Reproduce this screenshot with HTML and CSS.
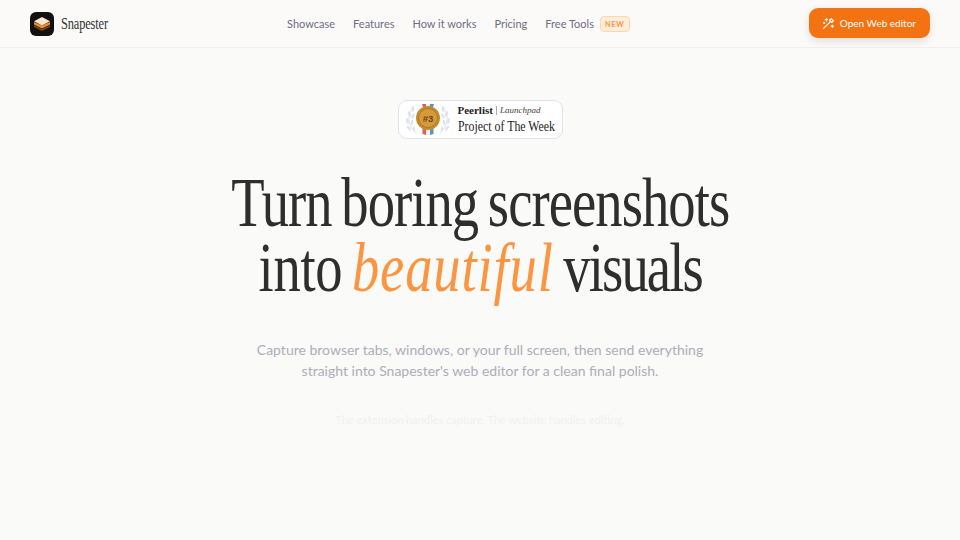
FILE: index.html
```html
<!DOCTYPE html>
<html lang="en">
<head>
    <meta charset="UTF-8">
    <meta name="viewport" content="width=device-width, initial-scale=1.0">
    <title>Snapester</title>
    <link rel="stylesheet" href="styles.css">
</head>
<body>
    <header class="navbar">
        <a class="brand" href="#">
            <span class="brand-icon">
                <svg width="24" height="24" viewBox="0 0 24 24">
                    <path d="M12 17 L20 13 V15 L12 19 L4 15 V13 Z" fill="#7d430f"/>
                    <path d="M12 13.5 L20 10 V12.5 L12 16.5 L4 12.5 V10 Z" fill="#ee9030"/>
                    <path d="M12 5 L20 9.2 L12 13.4 L4 9.2 Z" fill="#fde6cc"/>
                </svg>
            </span>
            <span class="brand-name">Snapester</span>
        </a>
        <nav class="nav-links">
            <a href="#">Showcase</a>
            <a href="#">Features</a>
            <a href="#">How it works</a>
            <a href="#">Pricing</a>
            <a href="#" class="tools-link">Free Tools <span class="new-tag">NEW</span></a>
        </nav>
        <a class="cta" href="#">
            <svg width="13" height="13" viewBox="0 0 24 24" fill="none" stroke="#fff" stroke-width="2.2" stroke-linecap="round" stroke-linejoin="round">
                <path d="M3 21 15 9"/>
                <path d="M14 6l4 4"/>
                <path d="M17 3l4 4-3 3-4-4z"/>
                <path d="M8 3v4M6 5h4M4 10v2M3 11h2M19 15v4M17 17h4"/>
            </svg>
            Open Web editor
        </a>
    </header>

    <main class="hero">
        <div class="award">
            <svg class="award-medal" width="48" height="34" viewBox="0 0 48 34">
                <!-- wreath -->
                <g fill="none" stroke="#dfe3ec" stroke-width="1" stroke-linecap="round">
                    <path d="M9 4c-6 7-6 18 3 26"/>
                    <path d="M39 4c6 7 6 18-3 26"/>
                </g>
                <g fill="#dfe3ec">
                    <ellipse cx="9" cy="6" rx="1.3" ry="3"/>
                    <ellipse cx="5.5" cy="11" rx="1.4" ry="3" transform="rotate(-20 5.5 11)"/>
                    <ellipse cx="9" cy="13" rx="1.2" ry="2.8" transform="rotate(20 9 13)"/>
                    <ellipse cx="3.5" cy="18" rx="1.4" ry="3" transform="rotate(-10 3.5 18)"/>
                    <ellipse cx="8" cy="19.5" rx="1.2" ry="2.8" transform="rotate(15 8 19.5)"/>
                    <ellipse cx="5" cy="25" rx="1.4" ry="3" transform="rotate(-40 5 25)"/>
                    <ellipse cx="10" cy="26" rx="1.2" ry="2.6" transform="rotate(-5 10 26)"/>
                    <ellipse cx="39" cy="6" rx="1.3" ry="3"/>
                    <ellipse cx="42.5" cy="11" rx="1.4" ry="3" transform="rotate(20 42.5 11)"/>
                    <ellipse cx="39" cy="13" rx="1.2" ry="2.8" transform="rotate(-20 39 13)"/>
                    <ellipse cx="44.5" cy="18" rx="1.4" ry="3" transform="rotate(10 44.5 18)"/>
                    <ellipse cx="40" cy="19.5" rx="1.2" ry="2.8" transform="rotate(-15 40 19.5)"/>
                    <ellipse cx="43" cy="25" rx="1.4" ry="3" transform="rotate(40 43 25)"/>
                    <ellipse cx="38" cy="26" rx="1.2" ry="2.6" transform="rotate(5 38 26)"/>
                </g>
                <!-- ribbons -->
                <path d="M18 1h4l1 6h-3z" fill="#dd5f5a"/>
                <path d="M22 1h4l-1 6h-3z" fill="#f4f4f4"/>
                <path d="M26 1h4l-2 6h-3z" fill="#5c93c9"/>
                <path d="M18.500 24h3.500v8l-3.500 -1z" fill="#dd5f5a"/>
                <path d="M22 24h4v8h-4z" fill="#f4f4f4"/>
                <path d="M26 24h3.500v7l-3.500 1z" fill="#5c93c9"/>
                <circle cx="24" cy="15" r="12" fill="#c68b30"/>
                <circle cx="24" cy="15" r="9.500" fill="#d49a3c" stroke="#a8721f" stroke-width="0.8"/>
                <text x="24" y="18.500" text-anchor="middle" class="medal-num">#3</text>
            </svg>
            <div class="award-text">
                <div class="award-top"><b>Peerlist</b><span class="award-bar"></span><i>Launchpad</i></div>
                <div class="award-title">Project of The Week</div>
            </div>
        </div>

        <h1 class="headline">
            <span class="line">Turn boring screenshots</span>
            <span class="line"><span class="word-into">into</span> <em>beautiful</em> <span class="word-visuals">visuals</span></span>
        </h1>

        <p class="lead">Capture browser tabs, windows, or your full screen, then send everything straight into Snapester's web editor for a clean final polish.</p>
        <p class="note">The extension handles capture. The website handles editing.</p>
    </main>
</body>
</html>
```

FILE: styles.css
```css
* {
    box-sizing: border-box;
}
body {
    font-family: "Lato", "Open Sans", sans-serif;
    background-color: #fafaf8;
    margin: 0;
    padding: 0;
    height: 540px;
    overflow: hidden;
}
a {
    text-decoration: none;
    color: inherit;
}
.navbar {
    height: 48px;
    display: flex;
    justify-content: space-between;
    align-items: center;
    padding: 0 30px;
    background: #fbfaf9;
    border-bottom: 1px solid #f0efed;
}
.brand {
    display: flex;
    align-items: center;
    gap: 7px;
}
.brand-icon {
    width: 24px;
    height: 24px;
    border-radius: 6px;
    background: #111;
    display: flex;
}
.brand-name {
    width: 47px;
    font-family: "Liberation Serif", serif;
    font-size: 17px;
    letter-spacing: -0.2px;
    color: #333;
    white-space: nowrap;
    transform: scaleX(0.73);
    transform-origin: left center;
}
.nav-links {
    display: flex;
    align-items: center;
    gap: 18px;
    font-size: 11px;
    color: #6f6d80;
}
.tools-link {
    display: flex;
    align-items: center;
    gap: 6px;
}
.new-tag {
    font-size: 7px;
    font-weight: 700;
    letter-spacing: 1px;
    color: #fb923c;
    background: #ffedd9;
    border: 1px solid #fed7b0;
    border-radius: 4px;
    padding: 3px 4px;
}
.cta {
    display: flex;
    align-items: center;
    gap: 5px;
    height: 30px;
    padding: 0 14px 0 13px;
    margin-top: -1px;
    background: #f37313;
    color: #fff;
    font-size: 10px;
    border-radius: 9px;
    box-shadow: 0 3px 8px rgba(0, 0, 0, 0.12);
}
.hero {
    display: flex;
    flex-direction: column;
    align-items: center;
    padding-top: 52px;
}
.award {
    width: 165px;
    height: 39px;
    display: flex;
    align-items: center;
    gap: 6px;
    padding: 0 5px;
    background: #fff;
    border: 1px solid #dfe3ec;
    border-radius: 9px;
}
.medal-num {
    font-family: "Liberation Sans", sans-serif;
    font-size: 9.5px;
    font-weight: 700;
    fill: #6b4310;
}
.award-text {
    font-family: "Liberation Serif", serif;
    color: #222;
}
.award-top {
    display: flex;
    align-items: center;
    gap: 3px;
    font-size: 11px;
    line-height: 13px;
}
.award-top i {
    font-size: 9px;
    color: #444;
}
.award-bar {
    width: 1px;
    height: 9px;
    background: #aaa;
}
.award-title {
    width: 97px;
    margin-top: 1px;
    font-size: 15px;
    line-height: 17px;
    white-space: nowrap;
    transform: scaleX(0.79);
    transform-origin: left center;
}
.headline {
    margin: 31px 0 0;
    font-family: "Liberation Serif", serif;
    font-weight: 400;
    font-size: 70px;
    line-height: 65px;
    letter-spacing: -1.2px;
    word-spacing: -4px;
    color: #2e2e2e;
    text-align: center;
    white-space: nowrap;
    transform: scaleX(0.78);
}
.line {
    display: block;
}
.word-into {
    letter-spacing: -0.4px;
}
.word-visuals {
    letter-spacing: -2.4px;
}
.headline em {
    letter-spacing: 1.1px;
    color: #fb9542;
}
.lead {
    width: 470px;
    margin: 39px 0 0;
    font-size: 14px;
    line-height: 21px;
    color: #adadba;
    text-align: center;
}
.note {
    margin: 32px 0 0;
    font-size: 11px;
    color: #f2f1f0;
    text-align: center;
}
```
